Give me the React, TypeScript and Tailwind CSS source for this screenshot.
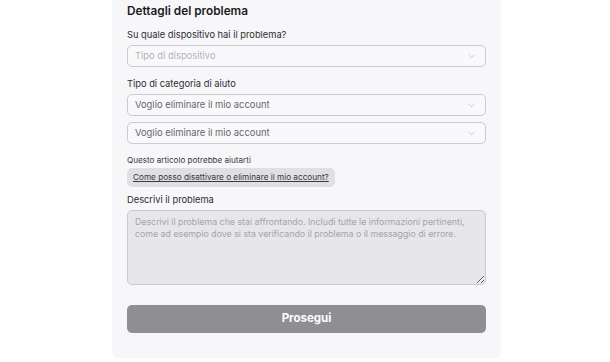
import { ChevronDown } from 'lucide-react'

const font = { fontFamily: 'Inter, "Noto Sans", sans-serif' }

function SelectBox({ value, placeholder }: { value?: string; placeholder?: string }) {
  return (
    <div className="flex h-[22px] items-center justify-between rounded-[5px] border border-[#cbcbd0] bg-[#f9f9fb] pl-[7px] pr-[9px]">
      <span className={value ? 'text-[9.4px] text-[#66666b]' : 'text-[9.4px] text-[#b3b3b8]'}>
        {value ?? placeholder}
      </span>
      <ChevronDown className="h-[9px] w-[9px] text-[#a5a5aa]" strokeWidth={1.5} />
    </div>
  )
}

export default function App() {
  return (
    <div className="min-h-screen bg-white" style={font}>
      <div className="ml-[112px] w-[389px] rounded-b-[6px] bg-[#f7f7fa] px-[15px] pt-[3px] pb-[25px]">
        <h2 className="text-[11.8px] leading-[16px] font-semibold text-[#1c1c1e]">Dettagli del problema</h2>

        <p className="mt-[10px] text-[9.3px] leading-[12px] text-[#2c2c2e]">Su quale dispositivo hai il problema?</p>
        <div className="mt-[4px]">
          <SelectBox placeholder="Tipo di dispositivo" />
        </div>

        <p className="mt-[11px] text-[9.3px] leading-[12px] text-[#2c2c2e]">Tipo di categoria di aiuto</p>
        <div className="mt-[4px] flex flex-col gap-[6px]">
          <SelectBox value="Voglio eliminare il mio account" />
          <SelectBox value="Voglio eliminare il mio account" />
        </div>

        <p className="mt-[10px] text-[8.1px] leading-[12px] text-[#3a3a3c]">Questo articolo potrebbe aiutarti</p>
        <div className="mt-[2px] flex">
          <a className="flex h-[19px] items-center rounded-[5px] bg-[#dfdfe4] px-[6px] text-[8.2px] text-[#3a3a3c] underline">
            Come posso disattivare o eliminare il mio account?
          </a>
        </div>

        <p className="mt-[7px] text-[9.3px] leading-[12px] text-[#2c2c2e]">Descrivi il problema</p>
        <textarea
          className="mt-[4px] block h-[75px] w-full rounded-[5px] border border-[#c9c9ce] bg-[#e6e6eb] px-[7px] py-[5px] text-[8.8px] leading-[12px] outline-none placeholder:text-[#a5a5aa]"
          placeholder="Descrivi il problema che stai affrontando. Includi tutte le informazioni pertinenti, come ad esempio dove si sta verificando il problema o il messaggio di errore."
        />

        <button className="mt-[20px] flex h-[28px] w-full items-center justify-center rounded-[5px] bg-[#8e8e93] text-[11.5px] font-bold text-white">
          Prosegui
        </button>
      </div>
    </div>
  )
}
